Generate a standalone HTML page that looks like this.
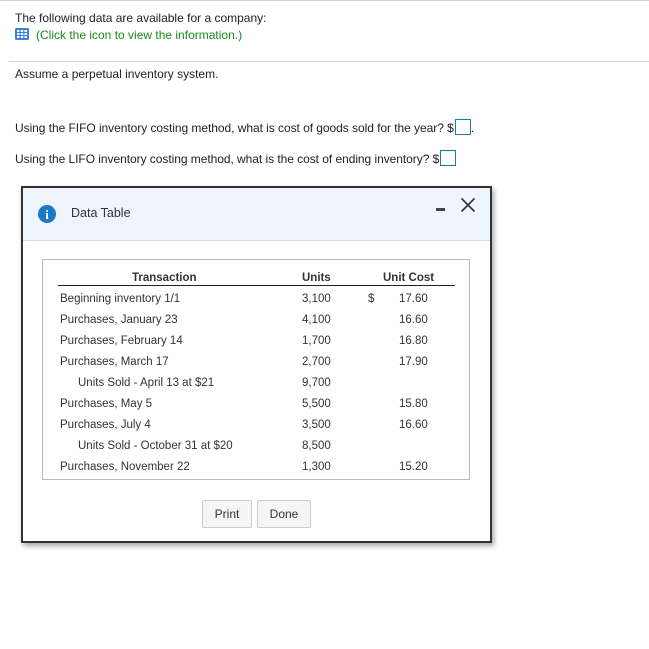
<!DOCTYPE html>
<html><head><style>
body{margin:0;width:649px;height:649px;background:#fff;font-family:"Liberation Sans",Arial,sans-serif;font-size:12px;color:#222;position:relative;overflow:hidden}
.a{position:absolute;white-space:nowrap}
.box{display:inline-block;width:14px;height:14px;border:1px solid #1a7ab8;vertical-align:-3px;margin-left:1px}
.dlg{position:absolute;left:21px;top:186px;width:467px;height:353px;border:2px solid #333;background:#fff;box-shadow:2px 3px 5px rgba(0,0,0,.35)}
.hd{position:absolute;left:0;top:0;width:467px;height:52px;background:#eef4fc;border-bottom:1px solid #cfdff0}
.tb{position:absolute;left:19px;top:71px;width:426px;height:219px;border:1px solid #bbb}
.r{position:absolute;font-size:11.5px;color:#333}
.btn{position:absolute;top:312px;height:26px;border:1px solid #ccc;border-radius:2px;background:#f5f5f5;font-size:12px;line-height:26px;text-align:center;color:#333}
</style></head><body>
<div class="a" style="left:0;top:0;width:649px;height:1px;background:#cfd3dc"></div>
<div class="a" style="left:15px;top:11px">The following data are available for a company:</div>
<svg class="a" style="left:15px;top:28px" width="14" height="12" viewBox="0 0 14 12"><rect width="14" height="12" rx="1.5" fill="#3b83d6"/><g fill="#fff"><rect x="2" y="2" width="2.5" height="2"/><rect x="5.75" y="2" width="2.5" height="2"/><rect x="9.5" y="2" width="2.5" height="2"/><rect x="2" y="5" width="2.5" height="2"/><rect x="5.75" y="5" width="2.5" height="2"/><rect x="9.5" y="5" width="2.5" height="2"/><rect x="2" y="8" width="2.5" height="2"/><rect x="5.75" y="8" width="2.5" height="2"/><rect x="9.5" y="8" width="2.5" height="2"/></g></svg>
<div class="a" style="left:36px;top:28px;color:#1a8a1a">(Click the icon to view the information.)</div>
<div class="a" style="left:9px;top:61px;width:640px;height:1px;background:#cfd3dc"></div>
<div class="a" style="left:15px;top:67px">Assume a perpetual inventory system.</div>
<div class="a" style="left:15px;top:119px;letter-spacing:-0.05px">Using the FIFO inventory costing method, what is cost of goods sold for the year? $<span class="box"></span>.</div>
<div class="a" style="left:15px;top:150px;letter-spacing:-0.05px">Using the LIFO inventory costing method, what is the cost of ending inventory? $<span class="box"></span></div>
<div class="dlg">
<div class="hd">
<svg class="a" style="left:15px;top:17px" width="18" height="18"><circle cx="9" cy="9" r="9" fill="#1a78c8"/><text x="9" y="14" font-family="Liberation Serif" font-weight="bold" font-size="13" fill="#fff" text-anchor="middle">i</text></svg>
<div class="a" style="left:48px;top:18px;font-size:12.5px;color:#333">Data Table</div>
<div class="a" style="left:413px;top:20px;width:9px;height:3px;background:#444"></div>
<svg class="a" style="left:437px;top:9px" width="16" height="16"><path d="M1.5 1.5L14.5 14.5M14.5 1.5L1.5 14.5" stroke="#333" stroke-width="1.6"/></svg>
</div>
<div class="tb">
<div class="r" style="left:89px;top:12px;font-weight:bold">Transaction</div>
<div class="r" style="left:259px;top:12px;font-weight:bold">Units</div>
<div class="r" style="left:340px;top:12px;font-weight:bold">Unit Cost</div>
<div class="a" style="left:15px;top:25px;width:397px;height:1px;background:#222"></div>
<div class="r" style="left:17px;top:33px">Beginning inventory 1/1</div><div class="r" style="left:259px;top:33px">3,100</div><div class="r" style="left:325px;top:33px">$</div><div class="r" style="left:356px;top:33px">17.60</div>
<div class="r" style="left:17px;top:54px">Purchases, January 23</div><div class="r" style="left:259px;top:54px">4,100</div><div class="r" style="left:356px;top:54px">16.60</div>
<div class="r" style="left:17px;top:75px">Purchases, February 14</div><div class="r" style="left:259px;top:75px">1,700</div><div class="r" style="left:356px;top:75px">16.80</div>
<div class="r" style="left:17px;top:96px">Purchases, March 17</div><div class="r" style="left:259px;top:96px">2,700</div><div class="r" style="left:356px;top:96px">17.90</div>
<div class="r" style="left:35px;top:117px">Units Sold - April 13 at $21</div><div class="r" style="left:259px;top:117px">9,700</div>
<div class="r" style="left:17px;top:138px">Purchases, May 5</div><div class="r" style="left:259px;top:138px">5,500</div><div class="r" style="left:356px;top:138px">15.80</div>
<div class="r" style="left:17px;top:159px">Purchases, July 4</div><div class="r" style="left:259px;top:159px">3,500</div><div class="r" style="left:356px;top:159px">16.60</div>
<div class="r" style="left:35px;top:180px">Units Sold - October 31 at $20</div><div class="r" style="left:259px;top:180px">8,500</div>
<div class="r" style="left:17px;top:201px">Purchases, November 22</div><div class="r" style="left:259px;top:201px">1,300</div><div class="r" style="left:356px;top:201px">15.20</div>
</div>
<div class="btn" style="left:179px;width:48px">Print</div>
<div class="btn" style="left:234px;width:52px">Done</div>
</div>
</body></html>
